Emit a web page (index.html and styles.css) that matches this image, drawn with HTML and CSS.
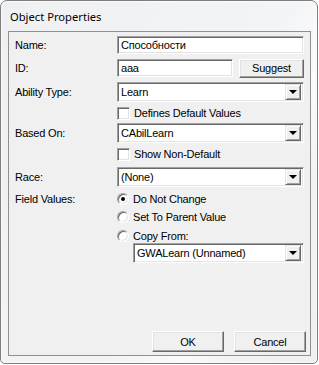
FILE: index.html
```html
<!DOCTYPE html>
<html>
<head>
<meta charset="utf-8">
<link rel="stylesheet" href="styles.css">
</head>
<body>
<div class="window">
  <div class="titlebar"><span class="title">Object Properties</span></div>
  <div class="client">
    <div class="form">
      <div class="row r-name">
        <span class="label">Name:</span>
        <div class="edit w-full">Способности</div>
      </div>
      <div class="row r-id">
        <span class="label">ID:</span>
        <div class="edit w-id">aaa</div>
        <div class="btn btn-suggest">Suggest</div>
      </div>
      <div class="row r-ability">
        <span class="label">Ability Type:</span>
        <div class="combo w-full"><span class="combo-text">Learn</span><span class="arrow"></span></div>
      </div>
      <div class="row r-check1">
        <span class="label"></span>
        <span class="check"></span><span class="opt">Defines Default Values</span>
      </div>
      <div class="row r-based">
        <span class="label">Based On:</span>
        <div class="combo w-full"><span class="combo-text">CAbilLearn</span><span class="arrow"></span></div>
      </div>
      <div class="row r-check2">
        <span class="label"></span>
        <span class="check"></span><span class="opt">Show Non-Default</span>
      </div>
      <div class="row r-race">
        <span class="label">Race:</span>
        <div class="combo w-full"><span class="combo-text">(None)</span><span class="arrow"></span></div>
      </div>
      <div class="row r-radio1">
        <span class="label">Field Values:</span>
        <span class="radio checked"></span><span class="opt">Do Not Change</span>
      </div>
      <div class="row r-radio2">
        <span class="label"></span>
        <span class="radio"></span><span class="opt">Set To Parent Value</span>
      </div>
      <div class="row r-radio3">
        <span class="label"></span>
        <span class="radio"></span><span class="opt">Copy From:</span>
      </div>
      <div class="row r-copy">
        <span class="label indent"></span>
        <div class="combo w-copy"><span class="combo-text">GWALearn (Unnamed)</span><span class="arrow"></span></div>
      </div>
    </div>
    <div class="buttons">
      <div class="btn btn-dlg">OK</div>
      <div class="btn btn-dlg">Cancel</div>
    </div>
  </div>
</div>
</body>
</html>
```

FILE: styles.css
```css
html, body {
  margin: 0;
  padding: 0;
  background: #ffffff;
}

.window {
  width: 318px;
  height: 364px;
  box-sizing: border-box;
  border: 1px solid #7d7d7d;
  border-radius: 7px 7px 5px 5px;
  background: linear-gradient(115deg, #eff0f2 0%, #f3f4f6 60%, #fbfbfc 72%, #f1f2f4 82%, #eef0f2 100%);
  box-shadow: inset 0 0 0 1px #fbfbfb;
  display: flex;
  flex-direction: column;
  padding: 0 6px 7px 7px;
  font-family: "Liberation Sans", Arial, sans-serif;
  font-size: 11px;
  letter-spacing: -0.2px;
  color: #000;
}

.titlebar {
  height: 30px;
  display: flex;
  align-items: center;
  padding-left: 2px;
}

.title {
  font-family: "Noto Sans", "Open Sans", sans-serif;
  font-size: 11.2px;
  letter-spacing: 0;
  color: #000;
  margin-top: 1px;
}

.client {
  flex: 1;
  border: 1px solid #8e8f8f;
  background: #f0f0f0;
  display: flex;
  flex-direction: column;
  padding: 0 0 0 6px;
}

.form {
  display: flex;
  flex-direction: column;
}

.row {
  display: flex;
  align-items: center;
}

.label {
  width: 102px;
  flex: none;
}

.label.indent {
  width: 118px;
}

.r-name { margin-top: 4px; height: 18px; }
.r-id { margin-top: 5px; height: 18px; }
.r-ability { margin-top: 5px; height: 20px; }
.r-check1 { margin-top: 4px; height: 14px; }
.r-based { margin-top: 3px; height: 20px; }
.r-check2 { margin-top: 4px; height: 14px; }
.r-race { margin-top: 6px; height: 20px; }
.r-radio1 { margin-top: 5px; height: 14px; }
.r-radio2 { margin-top: 4px; height: 14px; }
.r-radio3 { margin-top: 5px; height: 14px; }
.r-copy { margin-top: 0px; height: 20px; }

.edit {
  height: 18px;
  box-sizing: border-box;
  background: #fff;
  border-top: 1px solid #a0a0a0;
  border-left: 1px solid #a0a0a0;
  border-right: 1px solid #ffffff;
  border-bottom: 1px solid #ffffff;
  box-shadow: inset 1px 1px 0 #696969, inset -1px -1px 0 #e3e3e3;
  padding: 0 3px;
  display: flex;
  align-items: center;
}

.w-full { width: 187px; }
.w-id { width: 116px; }
.w-copy { width: 171px; }

.btn {
  box-sizing: border-box;
  background: #f0f0f0;
  border-top: 1px solid #ffffff;
  border-left: 1px solid #ffffff;
  border-right: 1px solid #696969;
  border-bottom: 1px solid #696969;
  box-shadow: inset -1px -1px 0 #a0a0a0, inset 1px 1px 0 #e3e3e3;
  display: flex;
  align-items: center;
  justify-content: center;
}

.btn-suggest {
  width: 65px;
  height: 19px;
  margin-left: 6px;
}

.combo {
  height: 20px;
  box-sizing: border-box;
  background: #fff;
  border-top: 1px solid #a0a0a0;
  border-left: 1px solid #a0a0a0;
  border-right: 1px solid #ffffff;
  border-bottom: 1px solid #ffffff;
  box-shadow: inset 1px 1px 0 #696969, inset -1px -1px 0 #e3e3e3;
  padding: 2px;
  display: flex;
  align-items: center;
}

.combo-text {
  flex: 1;
  padding-left: 1px;
}

.arrow {
  width: 16px;
  height: 16px;
  box-sizing: border-box;
  background: #f0f0f0;
  border-top: 1px solid #e3e3e3;
  border-left: 1px solid #e3e3e3;
  border-right: 1px solid #696969;
  border-bottom: 1px solid #696969;
  box-shadow: inset 1px 1px 0 #ffffff, inset -1px -1px 0 #a0a0a0;
  position: relative;
}

.arrow::after {
  content: "";
  position: absolute;
  left: 3px;
  top: 5px;
  border-left: 4px solid transparent;
  border-right: 4px solid transparent;
  border-top: 4px solid #000;
}

.check {
  width: 13px;
  height: 13px;
  box-sizing: border-box;
  background: #fff;
  border-top: 1px solid #a0a0a0;
  border-left: 1px solid #a0a0a0;
  border-right: 1px solid #ffffff;
  border-bottom: 1px solid #ffffff;
  box-shadow: inset 1px 1px 0 #696969, inset -1px -1px 0 #e3e3e3;
  flex: none;
}

.radio {
  width: 12px;
  height: 12px;
  box-sizing: border-box;
  border-radius: 50%;
  background: #fff;
  border: 1px solid;
  border-color: #a0a0a0 #ffffff #ffffff #a0a0a0;
  box-shadow: inset 1px 1px 0 #696969, inset -1px -1px 0 #e3e3e3;
  flex: none;
  position: relative;
}

.radio.checked::after {
  content: "";
  position: absolute;
  left: 3px;
  top: 3px;
  width: 4px;
  height: 4px;
  border-radius: 50%;
  background: #000;
}

.opt {
  margin-left: 4px;
}

.buttons {
  margin-top: auto;
  margin-bottom: 3px;
  display: flex;
  justify-content: flex-end;
  gap: 10px;
  padding-right: 4px;
}

.btn-dlg {
  width: 72px;
  height: 21px;
}
```
